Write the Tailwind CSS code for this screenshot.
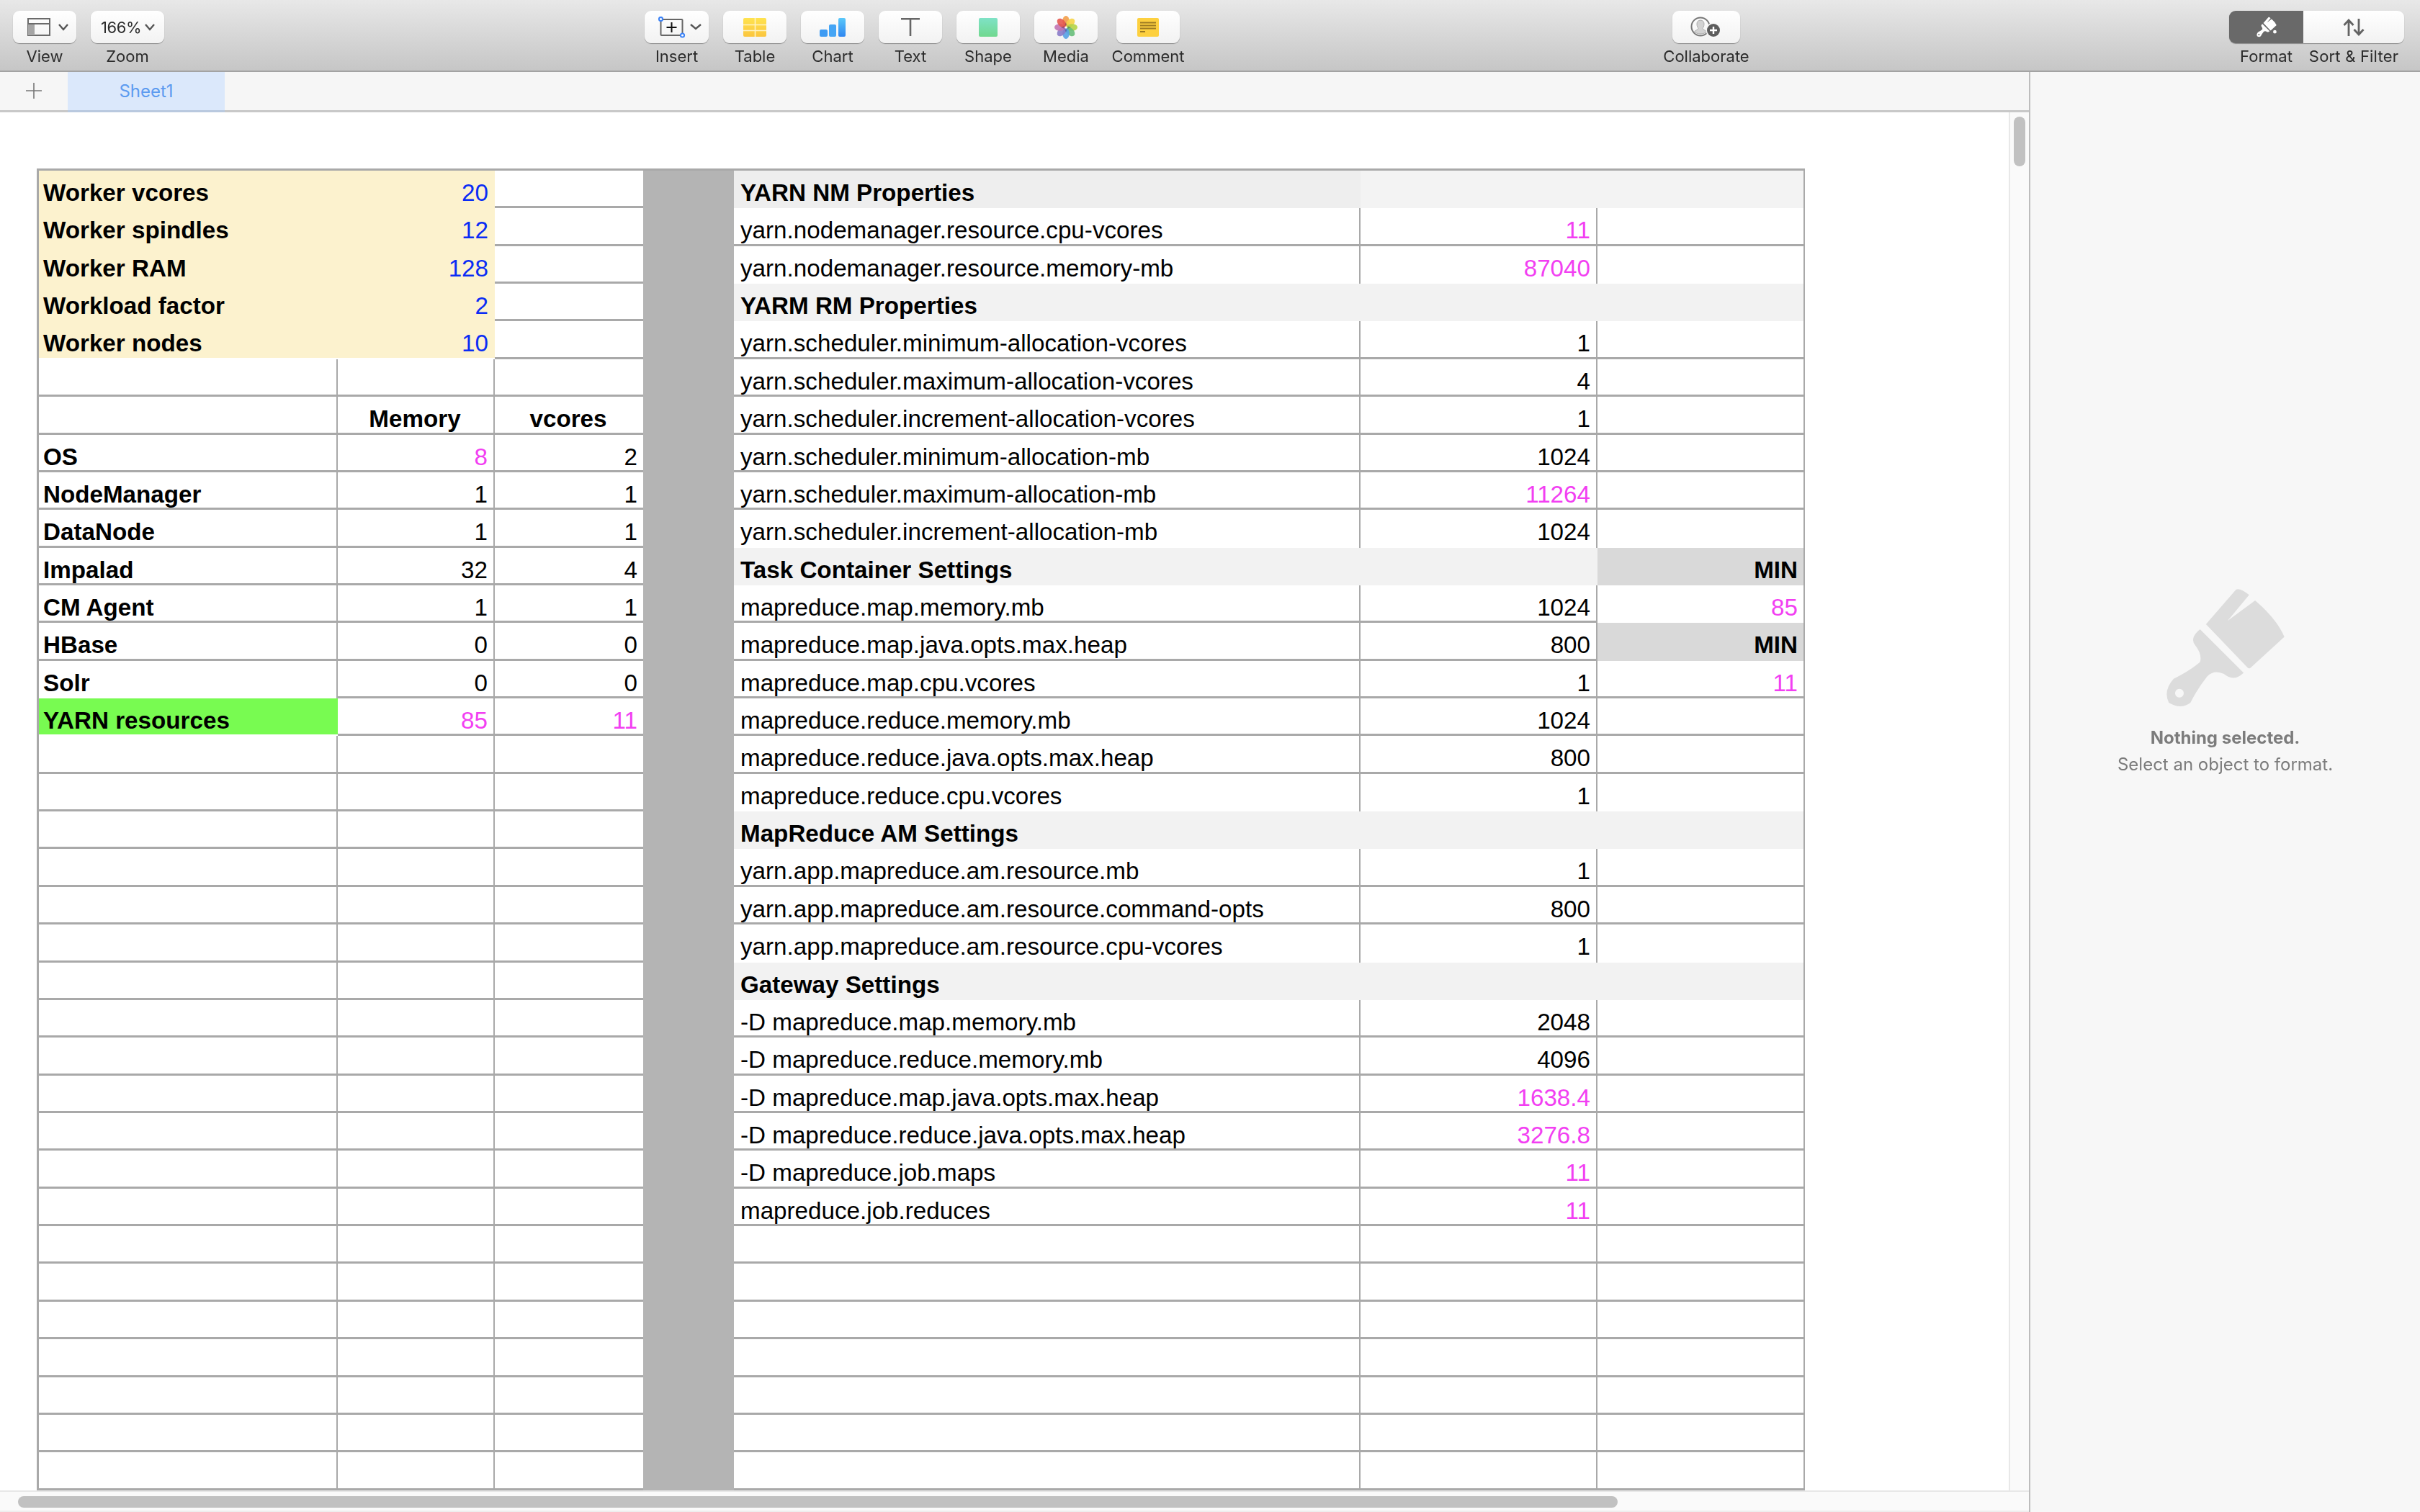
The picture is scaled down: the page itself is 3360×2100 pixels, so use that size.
<!doctype html>
<html>
<head>
<meta charset="utf-8">
<title>Numbers</title>
<script src="https://cdn.jsdelivr.net/npm/@tailwindcss/browser@4"></script>
</head>
<body class="m-0 bg-white">
<div class="w-[3360px] h-[2100px] flex flex-col overflow-hidden font-['Inter',sans-serif]">

  <!-- Toolbar -->
  <header class="h-[100px] shrink-0 flex pl-[18px] pt-[15px] bg-gradient-to-b from-[#e8e8e8] to-[#c6c6c6] border-b-2 border-[#a3a3a3] text-[22px] leading-[26px] text-[#2b2b2b] [&>div]:flex [&>div]:flex-col [&>div]:items-center [&>div]:whitespace-nowrap [&_span]:mt-[5px]">
    <div class="w-[88px]">
      <button class="w-full h-[45px] rounded-[9px] bg-gradient-to-b from-white to-[#f2f2f2] shadow-[0_1px_1px_#8a8a8a] flex items-center">
        <svg class="ml-[20px]" width="60" height="26" viewBox="0 0 60 26" fill="none">
          <rect x="1" y="1" width="30" height="23" stroke="#6a6a6a" stroke-width="2"/>
          <rect x="1" y="8" width="9" height="16" fill="#a5a5a5"/>
          <path d="M1 8H31" stroke="#6a6a6a" stroke-width="2"/>
          <path d="M44 9l6 7 6-7" stroke="#555" stroke-width="2.4"/>
        </svg>
      </button>
      <span>View</span>
    </div>
    <div class="w-[102px] ml-[20px]">
      <button class="w-full h-[45px] rounded-[9px] bg-gradient-to-b from-white to-[#f2f2f2] shadow-[0_1px_1px_#8a8a8a] flex items-center pl-[14px] text-[#2b2b2b] tracking-[-0.4px]">166%
        <svg class="ml-[4px]" width="16" height="12" viewBox="0 0 16 12" fill="none"><path d="M2 2l6 7 6-7" stroke="#555" stroke-width="2.4"/></svg>
      </button>
      <span>Zoom</span>
    </div>
    <div class="w-[89px] ml-[667px]">
      <button class="w-full h-[45px] rounded-[9px] bg-gradient-to-b from-white to-[#f2f2f2] shadow-[0_1px_1px_#8a8a8a] flex items-center">
        <svg class="ml-[19px]" width="62" height="30" viewBox="0 0 62 30" fill="none">
          <rect x="3.5" y="4" width="30" height="22" rx="1" stroke="#666" stroke-width="2"/>
          <path d="M18.5 8v14M11.5 15h14" stroke="#111" stroke-width="2"/>
          <circle cx="3.5" cy="3.5" r="2.6" fill="#fff" stroke="#3b82f6" stroke-width="2"/>
          <circle cx="33.5" cy="26" r="2.6" fill="#fff" stroke="#3b82f6" stroke-width="2"/>
          <path d="M45 11l7 6 7-6" stroke="#555" stroke-width="2.4"/>
        </svg>
      </button>
      <span>Insert</span>
    </div>
    <div class="w-[88px] ml-[20px]">
      <button class="w-full h-[45px] rounded-[9px] bg-gradient-to-b from-white to-[#f2f2f2] shadow-[0_1px_1px_#8a8a8a] flex items-center justify-center">
        <svg width="32" height="26" viewBox="0 0 32 26">
          <defs><linearGradient id="ty" x1="0" y1="0" x2="0" y2="1"><stop offset="0" stop-color="#ffe34f"/><stop offset="1" stop-color="#fbc53e"/></linearGradient></defs>
          <rect width="32" height="26" rx="2" fill="url(#ty)"/>
          <path d="M0 9.5H32M0 17.5H32M16.500 0V26" stroke="#fff3c4" stroke-width="1.6"/>
        </svg>
      </button>
      <span>Table</span>
    </div>
    <div class="w-[88px] ml-[20px]">
      <button class="w-full h-[45px] rounded-[9px] bg-gradient-to-b from-white to-[#f2f2f2] shadow-[0_1px_1px_#8a8a8a] flex items-center justify-center">
        <svg width="36" height="26" viewBox="0 0 36 26">
          <defs><linearGradient id="tb" x1="0" y1="0" x2="0" y2="1"><stop offset="0" stop-color="#5ac8fa"/><stop offset="1" stop-color="#2f86f0"/></linearGradient></defs>
          <rect x="0" y="16" width="11" height="10" rx="2" fill="#3d9bf3"/>
          <rect x="13" y="9" width="10" height="17" rx="2" fill="#45a5f5"/>
          <rect x="26" y="0" width="10" height="26" rx="2" fill="url(#tb)"/>
        </svg>
      </button>
      <span>Chart</span>
    </div>
    <div class="w-[88px] ml-[20px]">
      <button class="w-full h-[45px] rounded-[9px] bg-gradient-to-b from-white to-[#f2f2f2] shadow-[0_1px_1px_#8a8a8a] flex items-center justify-center">
        <svg width="26" height="25" viewBox="0 0 26 25" fill="none"><path d="M0 1.200H26M13 1.200V25" stroke="#666" stroke-width="2.600"/></svg>
      </button>
      <span>Text</span>
    </div>
    <div class="w-[88px] ml-[20px]">
      <button class="w-full h-[45px] rounded-[9px] bg-gradient-to-b from-white to-[#f2f2f2] shadow-[0_1px_1px_#8a8a8a] flex items-center justify-center">
        <div class="w-[26px] h-[26px] rounded-[2px] bg-gradient-to-b from-[#7fe2c6] to-[#70d88e]"></div>
      </button>
      <span>Shape</span>
    </div>
    <div class="w-[88px] ml-[20px]">
      <button class="w-full h-[45px] rounded-[9px] bg-gradient-to-b from-white to-[#f2f2f2] shadow-[0_1px_1px_#8a8a8a] flex items-center justify-center">
        <svg width="32" height="32" viewBox="-16 -16 32 32">
          <g class="mix-blend-multiply">
            <ellipse cx="0" cy="-8.500" rx="4.800" ry="7.500" fill="#f5a04a" opacity="0.9"/>
            <ellipse cx="0" cy="-8.500" rx="4.800" ry="7.500" fill="#fbd84a" opacity="0.9" transform="rotate(45)"/>
            <ellipse cx="0" cy="-8.500" rx="4.800" ry="7.500" fill="#b9d94a" opacity="0.9" transform="rotate(90)"/>
            <ellipse cx="0" cy="-8.500" rx="4.800" ry="7.500" fill="#6cc57f" opacity="0.9" transform="rotate(135)"/>
            <ellipse cx="0" cy="-8.500" rx="4.800" ry="7.500" fill="#5aa8f0" opacity="0.9" transform="rotate(180)"/>
            <ellipse cx="0" cy="-8.500" rx="4.800" ry="7.500" fill="#8f7fd0" opacity="0.9" transform="rotate(225)"/>
            <ellipse cx="0" cy="-8.500" rx="4.800" ry="7.500" fill="#c878b8" opacity="0.9" transform="rotate(270)"/>
            <ellipse cx="0" cy="-8.500" rx="4.800" ry="7.500" fill="#ea5a50" opacity="0.9" transform="rotate(315)"/>
          </g>
          <path d="M0-7L-3 0 0 7 3 0Z M-7 0L0-3 7 0 0 3Z" fill="#2a2a60" opacity="0.35"/>
          <circle r="1.500" fill="#fff"/>
        </svg>
      </button>
      <span>Media</span>
    </div>
    <div class="w-[88px] ml-[26px]">
      <button class="w-full h-[45px] rounded-[9px] bg-gradient-to-b from-white to-[#f2f2f2] shadow-[0_1px_1px_#8a8a8a] flex items-center justify-center">
        <svg width="30" height="26" viewBox="0 0 30 26">
          <rect width="30" height="26" rx="2" fill="#fdd03f"/>
          <path d="M4 6.500H26M4 10.500H26M4 14.500H26M4 19H11" stroke="#9c7a22" stroke-width="2"/>
        </svg>
      </button>
      <span>Comment</span>
    </div>
    <div class="w-[94px] ml-[684px]">
      <button class="w-full h-[45px] rounded-[9px] bg-gradient-to-b from-white to-[#f2f2f2] shadow-[0_1px_1px_#8a8a8a] flex items-center justify-center">
        <svg width="44" height="32" viewBox="0 0 44 32" fill="none">
          <circle cx="14" cy="15" r="12.500" stroke="#777" stroke-width="2"/>
          <path d="M14 6c3.500 0 5 2.500 5 5.500s-1.500 5-2 6c0 1.500 4 2.500 5.500 4.500-2 2-5 3-8.500 3s-6.500-1-8.500-3c1.500-2 5.500-3 5.500-4.500-.5-1-2-3-2-6S10.500 6 14 6z" fill="#d2d2d2" stroke="#aaa" stroke-width="1"/>
          <circle cx="32" cy="20" r="10.500" fill="#f7f7f7"/>
          <circle cx="32" cy="20" r="9" fill="#5c5c5c"/>
          <path d="M32 15v10M27 20h10" stroke="#fff" stroke-width="2.400"/>
        </svg>
      </button>
      <span>Collaborate</span>
    </div>
    <div class="w-[103px] ml-[679px]">
      <button class="w-full h-[45px] rounded-l-[9px] bg-[#696969] shadow-[0_1px_1px_#8a8a8a] flex items-center justify-center">
        <svg width="30" height="29" viewBox="300 100 530 520">
          <path fill="#fff" d="M485 262L610 118Q625 108 665 140L575 248 690 163Q780 240 812 315L670 445Q662 450 655 440Z"/>
          <path fill="#fff" fill-rule="evenodd" d="M460 283L642 465Q600 505 560 470 520 450 490 480 450 530 420 590 380 620 330 590 305 540 350 490 420 455 460 420 470 390 440 350 415 320 460 283ZM374 532a18 18 0 1 0 .1 0Z"/>
          <circle cx="770" cy="480" r="42" fill="#fff"/>
        </svg>
      </button>
      <span>Format</span>
    </div>
    <div class="w-[140px]">
      <button class="w-full h-[45px] rounded-r-[9px] bg-gradient-to-b from-white to-[#f2f2f2] shadow-[0_1px_1px_#8a8a8a] flex items-center justify-center">
        <svg width="30" height="24" viewBox="0 0 30 24" fill="none" stroke="#636363" stroke-width="2.800">
          <path d="M8 24V2M1.500 9L8 2l6.500 7"/>
          <path d="M22 0v22M15.500 15l6.500 7 6.500-7"/>
        </svg>
      </button>
      <span class="tracking-[0.2px]">Sort &amp; Filter</span>
    </div>
  </header>

  <div class="flex-1 flex min-h-0">
    <!-- Main column -->
    <main class="w-[2819px] shrink-0 flex flex-col border-r-2 border-[#bdbdbd] bg-[#fafafa]">
      <!-- Tab bar -->
      <nav class="h-[56px] shrink-0 flex bg-[#f6f6f6] border-b-[3px] border-[#c8c8c8]">
        <div class="w-[94px] flex items-center justify-center pb-[2px]">
          <svg width="22" height="22" viewBox="0 0 22 22" fill="none"><path d="M11 0v22M0 11h22" stroke="#777" stroke-width="1.600"/></svg>
        </div>
        <div class="w-[218px] -mb-[3px] border-b-[3px] border-[#b9c9df] bg-[#dbe8fb] flex items-center justify-center text-[24px] text-[#5c9bf0]">Sheet1</div>
      </nav>

      <div class="flex-1 flex min-h-0">
        <!-- Canvas -->
        <section class="w-[2789px] shrink-0 bg-white overflow-hidden pl-[51px] pt-[78px]">
          <div class="flex w-[2455px] border-t-[3px] border-[#a9a9a9] text-[33.2px] leading-[36px] text-black font-['Liberation_Sans',Arial,sans-serif]">

            <!-- Left table -->
            <div class="grid grid-cols-[415px_218px_208px] auto-rows-[52.37px] border-l-[3px] border-[#a9a9a9] [&>div]:border-b-[3px] [&>div]:border-r-2 [&>div]:border-[#a9a9a9] [&>div]:pt-[13px] [&>div]:pl-[6px] [&>div]:pr-[8px] [&>div]:whitespace-nowrap">
              <div class="col-span-2 border-0! bg-[#fcf2ce] font-bold flex justify-between pr-[9px]!"><b>Worker vcores</b><i class="not-italic font-normal text-[#0a2cf5]">20</i></div><div></div>
              <div class="col-span-2 border-0! bg-[#fcf2ce] font-bold flex justify-between pr-[9px]!"><b>Worker spindles</b><i class="not-italic font-normal text-[#0a2cf5]">12</i></div><div></div>
              <div class="col-span-2 border-0! bg-[#fcf2ce] font-bold flex justify-between pr-[9px]!"><b>Worker RAM</b><i class="not-italic font-normal text-[#0a2cf5]">128</i></div><div></div>
              <div class="col-span-2 border-0! bg-[#fcf2ce] font-bold flex justify-between pr-[9px]!"><b>Workload factor</b><i class="not-italic font-normal text-[#0a2cf5]">2</i></div><div></div>
              <div class="col-span-2 border-0! bg-[#fcf2ce] font-bold flex justify-between pr-[9px]! mb-[2px]"><b>Worker nodes</b><i class="not-italic font-normal text-[#0a2cf5]">10</i></div><div></div>
              <div></div><div></div><div></div>
              <div></div><div class="font-bold text-center">Memory</div><div class="font-bold text-center">vcores</div>
              <div class="font-bold">OS</div><div class="text-right text-[#f23ff2]">8</div><div class="text-right">2</div>
              <div class="font-bold">NodeManager</div><div class="text-right">1</div><div class="text-right">1</div>
              <div class="font-bold">DataNode</div><div class="text-right">1</div><div class="text-right">1</div>
              <div class="font-bold">Impalad</div><div class="text-right">32</div><div class="text-right">4</div>
              <div class="font-bold">CM Agent</div><div class="text-right">1</div><div class="text-right">1</div>
              <div class="font-bold">HBase</div><div class="text-right">0</div><div class="text-right">0</div>
              <div class="font-bold border-b-0!">Solr</div><div class="text-right">0</div><div class="text-right">0</div>
              <div class="font-bold border-0! bg-[#78fb51] mb-[2px]">YARN resources</div><div class="text-right text-[#f23ff2]">85</div><div class="text-right text-[#f23ff2]">11</div>
              <div></div><div></div><div></div>
              <div></div><div></div><div></div>
              <div></div><div></div><div></div>
              <div></div><div></div><div></div>
              <div></div><div></div><div></div>
              <div></div><div></div><div></div>
              <div></div><div></div><div></div>
              <div></div><div></div><div></div>
              <div></div><div></div><div></div>
              <div></div><div></div><div></div>
              <div></div><div></div><div></div>
              <div></div><div></div><div></div>
              <div></div><div></div><div></div>
              <div></div><div></div><div></div>
              <div></div><div></div><div></div>
              <div></div><div></div><div></div>
              <div></div><div></div><div></div>
              <div></div><div></div><div></div>
              <div></div><div></div><div></div>
              <div></div><div></div><div></div>
            </div>

            <!-- Grey separator -->
            <div class="w-[126px] -ml-[2px] shrink-0 bg-[#b4b4b4] relative"></div>

            <!-- Right table -->
            <div class="grid grid-cols-[870px_329px_288px] auto-rows-[52.37px] [&>div]:border-b-[3px] [&>div]:border-r-2 [&>div]:border-[#a9a9a9] [&>div]:pt-[13px] [&>div]:pl-[9px] [&>div]:pr-[8px] [&>div]:whitespace-nowrap">
              <div class="font-bold bg-[#eeeeee] border-0!">YARN NM Properties</div><div class="col-span-2 bg-[#f3f3f3] border-b-0!"></div>
              <div>yarn.nodemanager.resource.cpu-vcores</div><div class="text-right text-[#f23ff2]">11</div><div></div>
              <div class="border-b-0!">yarn.nodemanager.resource.memory-mb</div><div class="text-right text-[#f23ff2] border-b-0!">87040</div><div class="border-b-0!"></div>
              <div class="col-span-3 font-bold bg-[#f2f2f2] border-b-0!">YARM RM Properties</div>
              <div>yarn.scheduler.minimum-allocation-vcores</div><div class="text-right">1</div><div></div>
              <div>yarn.scheduler.maximum-allocation-vcores</div><div class="text-right">4</div><div></div>
              <div>yarn.scheduler.increment-allocation-vcores</div><div class="text-right">1</div><div></div>
              <div>yarn.scheduler.minimum-allocation-mb</div><div class="text-right">1024</div><div></div>
              <div>yarn.scheduler.maximum-allocation-mb</div><div class="text-right text-[#f23ff2]">11264</div><div></div>
              <div class="border-b-0!">yarn.scheduler.increment-allocation-mb</div><div class="text-right border-b-0!">1024</div><div class="border-b-0!"></div>
              <div class="col-span-2 font-bold bg-[#f2f2f2] border-0!">Task Container Settings</div><div class="font-bold text-right bg-[#d9d9d9] border-b-0!">MIN</div>
              <div>mapreduce.map.memory.mb</div><div class="text-right">1024</div><div class="text-right text-[#f23ff2] border-b-0!">85</div>
              <div>mapreduce.map.java.opts.max.heap</div><div class="text-right">800</div><div class="font-bold text-right bg-[#d9d9d9] border-b-0!">MIN</div>
              <div>mapreduce.map.cpu.vcores</div><div class="text-right">1</div><div class="text-right text-[#f23ff2]">11</div>
              <div>mapreduce.reduce.memory.mb</div><div class="text-right">1024</div><div></div>
              <div>mapreduce.reduce.java.opts.max.heap</div><div class="text-right">800</div><div></div>
              <div class="border-b-0!">mapreduce.reduce.cpu.vcores</div><div class="text-right border-b-0!">1</div><div class="border-b-0!"></div>
              <div class="col-span-3 font-bold bg-[#f2f2f2] border-b-0!">MapReduce AM Settings</div>
              <div>yarn.app.mapreduce.am.resource.mb</div><div class="text-right">1</div><div></div>
              <div>yarn.app.mapreduce.am.resource.command-opts</div><div class="text-right">800</div><div></div>
              <div class="border-b-0!">yarn.app.mapreduce.am.resource.cpu-vcores</div><div class="text-right border-b-0!">1</div><div class="border-b-0!"></div>
              <div class="col-span-3 font-bold bg-[#f2f2f2] border-b-0!">Gateway Settings</div>
              <div>-D mapreduce.map.memory.mb</div><div class="text-right">2048</div><div></div>
              <div>-D mapreduce.reduce.memory.mb</div><div class="text-right">4096</div><div></div>
              <div>-D mapreduce.map.java.opts.max.heap</div><div class="text-right text-[#f23ff2]">1638.4</div><div></div>
              <div>-D mapreduce.reduce.java.opts.max.heap</div><div class="text-right text-[#f23ff2]">3276.8</div><div></div>
              <div>-D mapreduce.job.maps</div><div class="text-right text-[#f23ff2]">11</div><div></div>
              <div>mapreduce.job.reduces</div><div class="text-right text-[#f23ff2]">11</div><div></div>
              <div></div><div></div><div></div>
              <div></div><div></div><div></div>
              <div></div><div></div><div></div>
              <div></div><div></div><div></div>
              <div></div><div></div><div></div>
              <div></div><div></div><div></div>
              <div></div><div></div><div></div>
            </div>
          </div>
        </section>
        <!-- Vertical scrollbar -->
        <aside class="flex-1 bg-[#fafafa] border-l-2 border-[#e8e8e8] pt-[6px] pl-[5px]">
          <div class="w-[16px] h-[69px] rounded-full bg-[#c1c1c1]"></div>
        </aside>
      </div>

      <!-- Horizontal scrollbar -->
      <div class="h-[30px] shrink-0 border-t-2 border-b-2 border-t-[#e8e8e8] border-b-[#eeeeee] bg-[#fafafa] pt-[6px] pl-[25px]">
        <div class="w-[2221px] h-[16px] rounded-full bg-[#c1c1c1]"></div>
      </div>
    </main>

    <!-- Format sidebar -->
    <aside class="flex-1 bg-[#f7f7f7] flex flex-col items-center pt-[713px]">
      <svg width="177" height="173" viewBox="300 100 530 520">
        <path fill="#dcdcdc" d="M485 262L610 118Q625 108 665 140L575 248 690 163Q780 240 812 315L670 445Q662 450 655 440Z"/>
        <path fill="#dcdcdc" fill-rule="evenodd" d="M460 283L642 465Q600 505 560 470 520 450 490 480 450 530 420 590 380 620 330 590 305 540 350 490 420 455 460 420 470 390 440 350 415 320 460 283ZM374 532a18 18 0 1 0 .1 0Z"/>
      </svg>
      <p class="mt-[24px] text-[24px] leading-[30px] font-bold text-[#7c7c7c]">Nothing selected.</p>
      <p class="mt-[7px] text-[24px] leading-[30px] text-[#7c7c7c]">Select an object to format.</p>
    </aside>
  </div>
</div>
</body>
</html>
